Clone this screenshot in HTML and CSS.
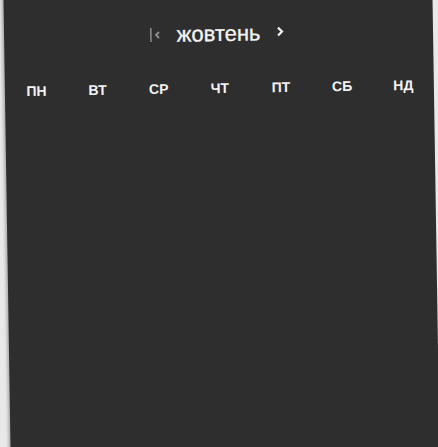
FILE: index.html
```html
<!DOCTYPE html>
<html lang="uk">
<head>
<meta charset="utf-8">
<link rel="stylesheet" href="styles.css">
</head>
<body>
<div class="panel">
  <div class="header">
    <span class="nav first">
      <svg width="12" height="16" viewBox="0 0 12 16"><rect x="0" y="1" width="1.6" height="14" fill="#8a8a8a"/><path d="M9 5 L6 8 L9 11" fill="none" stroke="#8a8a8a" stroke-width="2"/></svg>
    </span>
    <span class="month">жовтень</span>
    <span class="nav next">
      <svg width="10" height="14" viewBox="0 0 10 14"><path d="M3 2.5 L7 6.5 L3 10.5" fill="none" stroke="#f2f2f2" stroke-width="2.2"/></svg>
    </span>
  </div>
  <div class="weekdays">
    <span>ПН</span><span>ВТ</span><span>СР</span><span>ЧТ</span><span>ПТ</span><span>СБ</span><span>НД</span>
  </div>
</div>
</body>
</html>
```
FILE: styles.css
```css
html, body {
  margin: 0;
  padding: 0;
  height: 100%;
  overflow: hidden;
  background: #e9e9e9;
}
.panel {
  margin-left: 6.5px;
  margin-top: -20px;
  width: 429px;
  height: 486px;
  background: #2e2e2e;
  transform: rotate(-0.9deg);
  box-shadow: -2px 0 3px rgba(0,0,0,0.25);
  font-family: "Liberation Sans", Arial, sans-serif;
  color: #f4f4f4;
  box-sizing: border-box;
  padding-top: 41px;
}
.header {
  display: flex;
  justify-content: center;
  align-items: center;
  height: 26px;
}
.nav {
  display: flex;
  align-items: center;
}
.first { margin-right: 15px; margin-left: -2px; }
.next { margin-left: 15px; margin-top: -3px; }
.month {
  font-size: 22px;
  line-height: 26px;
  color: #f4f4f4;
  -webkit-text-stroke: 0.3px #f4f4f4;
}
.weekdays {
  display: grid;
  grid-template-columns: repeat(7, 1fr);
  padding: 0 0 0 1px;
  margin-top: 33px;
}
.weekdays span {
  text-align: center;
  font-weight: bold;
  font-size: 14px;
  line-height: 16px;
  color: #f4f4f4;
}
```
